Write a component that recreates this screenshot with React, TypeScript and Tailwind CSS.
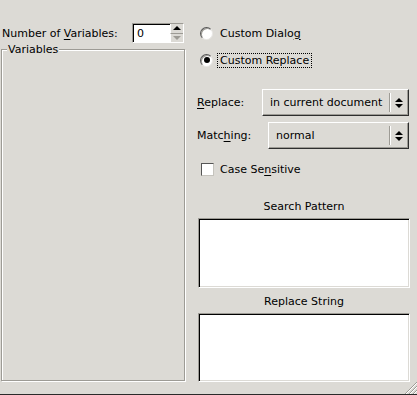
import React from "react";

const BG = "bg-[#dcdad5]";

function U({ children }: { children: React.ReactNode }) {
  return <span className="underline decoration-1 underline-offset-[2px]">{children}</span>;
}

function UpDown() {
  return (
    <div className="flex flex-col items-center gap-[2px]">
      <div className="h-0 w-0 border-x-[4px] border-b-[4px] border-x-transparent border-b-black" />
      <div className="h-0 w-0 border-x-[4px] border-t-[4px] border-x-transparent border-t-black" />
    </div>
  );
}

function Combo({ value, width }: { value: string; width: string }) {
  return (
    <div
      className={`flex h-[27px] ${width} items-center border border-b-[#2e2e2e] border-l-white border-r-[#2e2e2e] border-t-white ${BG} shadow-[inset_-1px_-1px_0_#9d9b95]`}
    >
      <span className="flex-1 pl-[7px] leading-none">{value}</span>
      <div className="mr-[3px] flex h-[19px] items-center">
        <div className="h-full w-px bg-[#9d9b95]" />
        <div className="h-full w-px bg-white" />
        <div className="ml-[4px] mr-[2px]">
          <UpDown />
        </div>
      </div>
    </div>
  );
}

function TextArea() {
  return (
    <div className="ml-[1px] mr-[1px] h-full border border-b-white border-l-[#9d9b95] border-r-white border-t-[#9d9b95] bg-white shadow-[inset_1px_1px_0_#000,inset_-1px_-1px_0_#dcdad5]" />
  );
}

function Radio({ checked }: { checked?: boolean }) {
  return (
    <div className="flex h-[13px] w-[13px] items-center justify-center rounded-full border border-b-[#e8e7e4] border-l-[#555] border-r-[#e8e7e4] border-t-[#555] bg-white shadow-[inset_1px_1px_0_#9d9b95]">
      {checked && <div className="h-[6px] w-[6px] rounded-full bg-black" />}
    </div>
  );
}

function Grip() {
  return (
    <svg className="absolute bottom-[1px] right-0" width="13" height="13" viewBox="0 0 13 13">
      {[0, 4, 8].map((o) => (
        <g key={o}>
          <line x1={13} y1={1 + o} x2={1 + o} y2={13} stroke="#9d9b95" strokeWidth="1" />
          <line x1={13} y1={2 + o} x2={2 + o} y2={13} stroke="#ffffff" strokeWidth="1" />
        </g>
      ))}
    </svg>
  );
}

export default function App() {
  return (
    <div className={`relative flex h-[395px] w-[417px] flex-col overflow-hidden ${BG} font-['DejaVu_Sans',sans-serif] text-[11px] text-black`}>
      <div className="flex h-[394px]">
        {/* Left column */}
        <div className="flex w-[186px] flex-col pl-[1px] pt-[23px]">
          <div className="flex h-[20px] items-center">
            <span className="pl-[1px] leading-none">
              Number of <U>V</U>ariables:
            </span>
            <div className="ml-auto mr-[2px] flex h-[20px] w-[52px] border border-b-white border-l-[#9d9b95] border-r-white border-t-[#9d9b95] bg-white shadow-[inset_1px_1px_0_#000]">
              <span className="flex-1 pl-[4px] pt-[4px] leading-none">0</span>
              <div className={`flex w-[13px] flex-col ${BG}`}>
                <div className="flex flex-1 items-center justify-center border-b border-[#9d9b95] border-l border-l-white">
                  <div className="h-0 w-0 border-x-[4px] border-b-[4px] border-x-transparent border-b-black" />
                </div>
                <div className="flex flex-1 items-center justify-center border-l border-l-white">
                  <div className="h-0 w-0 border-x-[4px] border-t-[4px] border-x-transparent border-t-[#9d9b95]" />
                </div>
              </div>
            </div>
          </div>
          <div className="relative mt-[6px] h-[332px] w-[184px] border border-[#9d9b95] shadow-[1px_1px_0_#fff,inset_1px_1px_0_#fff]">
            <span className={`absolute left-[5px] top-[-6px] ${BG} px-[1px] leading-none`}>Variables</span>
          </div>
        </div>

        {/* Right column */}
        <div className="ml-[11px] flex w-[214px] flex-col">
          <div className="mt-[23px] flex h-[20px] items-center pl-[3px]">
            <Radio />
            <span className="ml-[7px] leading-none">
              Custom Dialo<U>g</U>
            </span>
          </div>
          <div className="mt-[7px] flex h-[20px] items-center pl-[3px]">
            <Radio checked />
            <span className="ml-[4px] border border-dotted border-black px-[2px] pb-[1px] pt-[1px] leading-none">
              Custom Replace
            </span>
          </div>

          <div className="mt-[19px] flex items-center pr-[2px]">
            <span className="leading-none">
              <U>R</U>eplace:
            </span>
            <div className="ml-auto">
              <Combo value="in current document" width="w-[147px]" />
            </div>
          </div>
          <div className="mt-[6px] flex items-center pr-[2px]">
            <span className="leading-none">
              Matc<U>h</U>ing:
            </span>
            <div className="ml-auto">
              <Combo value="normal" width="w-[141px]" />
            </div>
          </div>

          <div className="mt-[14px] flex h-[13px] items-center pl-[4px]">
            <div className="h-[13px] w-[13px] border border-b-[#c5c3bd] border-l-[#555] border-r-[#c5c3bd] border-t-[#555] bg-white" />
            <span className="ml-[6px] leading-none">
              Case Se<U>n</U>sitive
            </span>
          </div>

          <div className="mt-[23px] flex h-[14px] items-center justify-center leading-none">Search Pattern</div>
          <div className="mt-[5px] h-[70px]">
            <TextArea />
          </div>

          <div className="mt-[6px] flex h-[14px] items-center justify-center leading-none">Replace String</div>
          <div className="mt-[5px] h-[69px]">
            <TextArea />
          </div>
        </div>
      </div>
      <div className="h-px bg-[#2a2a2a]" />
      <Grip />
    </div>
  );
}
